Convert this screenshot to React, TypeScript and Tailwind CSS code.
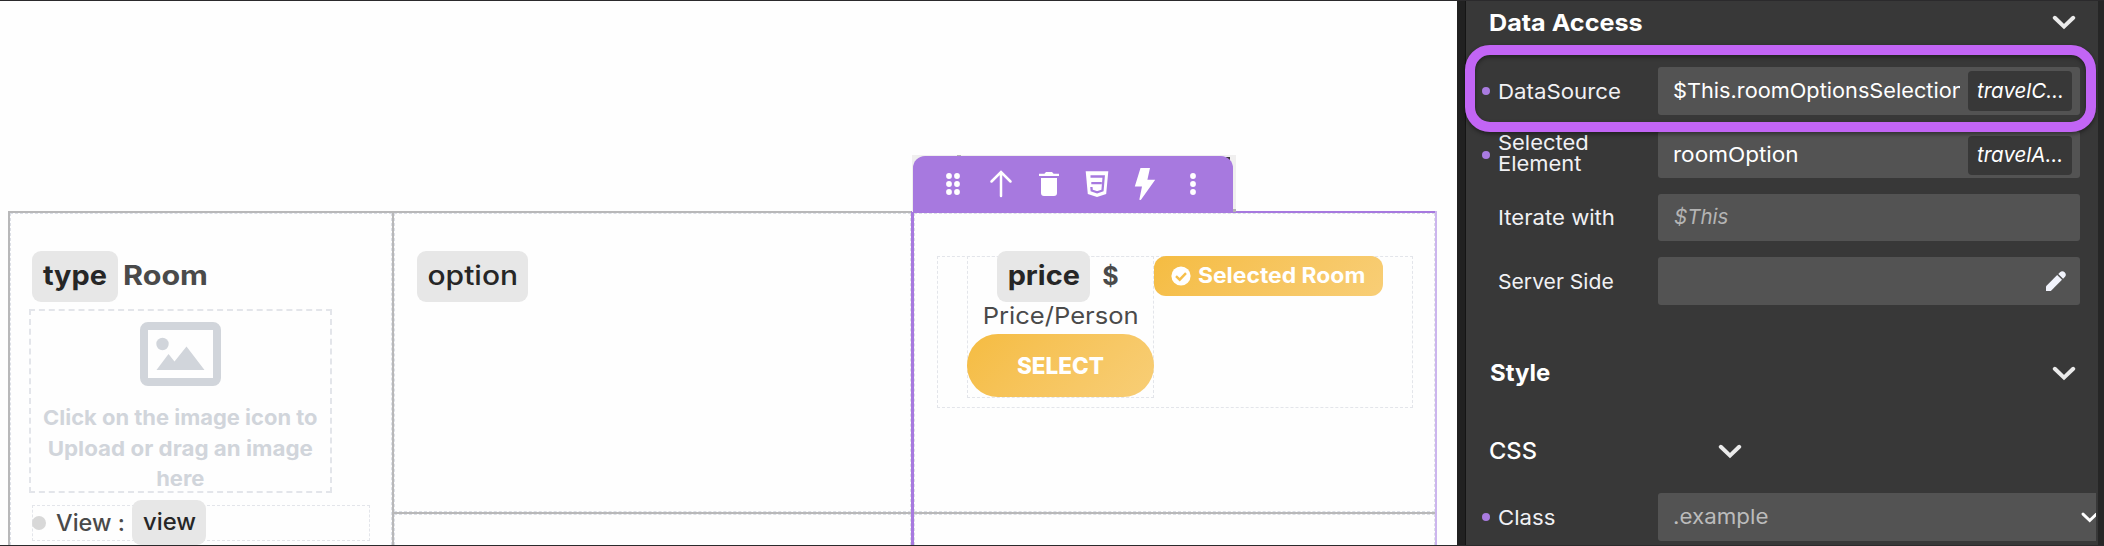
import type { ReactNode } from "react";

function Chevron({ className }: { className: string }) {
  return (
    <svg viewBox="0 0 24 15" className={className} fill="none" stroke="currentColor" strokeWidth="4" strokeLinecap="round">
      <path d="M2.8 2.8 L12 11.6 L21.2 2.8" strokeLinejoin="miter" />
    </svg>
  );
}

function Row({ label, dot, className, children }: { label: ReactNode; dot?: boolean; className: string; children: ReactNode }) {
  return (
    <div className={`flex shrink-0 items-center pl-4 ${className}`}>
      <span className={`h-2 w-2 shrink-0 rounded-full ${dot ? "bg-[#a97be0]" : ""}`} />
      <div className="w-[168px] shrink-0 whitespace-nowrap pl-2 text-[20.5px] leading-[21px] text-[#f1f1f4]">{label}</div>
      {children}
    </div>
  );
}

function Tag({ className = "h-10", children }: { className?: string; children: ReactNode }) {
  return (
    <span className={`mr-2 flex w-[104px] shrink-0 items-center rounded-[4px] bg-[#383838] pl-[9px] text-[20.5px] italic text-white ${className}`}>
      {children}
    </span>
  );
}

function Toolbar() {
  return (
    <div className="absolute left-[912px] top-[154px] h-[57px] w-[324px] bg-[#f0efef]">
      <span className="absolute left-[45px] top-0 h-px w-[4px] bg-[#b3b3b3]" />
      <span className="absolute left-[314px] top-[2px] h-[3px] w-[4px] bg-[#3a3a3a]" />
      <div className="relative ml-px mt-px h-14 w-[320px] rounded-t-[12px] bg-[#a779df]">
        <svg viewBox="913 156 320 56" className="h-14 w-[320px]" fill="#fff">
          {[176, 184, 192].map((y) => (
            <g key={y}>
              <circle cx="949" cy={y} r="2.9" />
              <circle cx="957" cy={y} r="2.9" />
              <circle cx="1193" cy={y} r="2.9" />
            </g>
          ))}
          <path d="M1001 196V172.5M991.5 181.5L1001 172L1010.5 181.5" fill="none" stroke="#fff" strokeWidth="2.5" strokeLinecap="round" />
          <path d="M1039 173.8h5.4l1.6-1.8h6l1.6 1.8h5.4v2.1h-20zM1041 178h16v15a3 3 0 0 1-3 3h-10a3 3 0 0 1-3-3z" />
          <path d="M1085.7 171.3h22.6l-2.1 22.7-9.2 3-9.2-3z" />
          <path d="M1090.5 176.5h13.2l-1.2 14-5.4 1.8-5.4-1.8-.3-3.5M1091.3 183.2h10.5" fill="none" stroke="#a779df" strokeWidth="2.3" />
          <path d="M1140.5 168h9.5l-2.6 11.7h7.8l-14.4 20.3-1.5-.3 2.7-13.2h-7.2z" />
        </svg>
      </div>
      <span className="absolute bottom-0 right-0 h-[3px] w-[3px] bg-[#b3b3b3]" />
    </div>
  );
}

const chip = "inline-flex items-center justify-center rounded-[9px] bg-[#e7e7e7] text-[#262626]";
const field = "flex shrink-0 items-center bg-[#535353] text-[20.5px] text-white";

export default function App() {
  return (
    <div className="relative flex h-[546px] w-[2104px] overflow-hidden border-y border-[#2b2a2c] bg-[#fefefe] font-[Inter,sans-serif]">
      <main className="h-[544px] w-[1457px] shrink-0 overflow-hidden pl-2 pt-[210px]">
        <div className="grid h-[334px] w-[1429px] grid-cols-[382px_519px_526px] border-l-2 border-[#b8b8b9]">
          <section className="border-t-2 border-[#b8b8b9]">
            <div className="h-[332px] overflow-hidden border border-b-0 border-dashed border-[#dcdfe6] pl-[18px] pt-[37px]">
              <h2 className="ml-[3px] flex items-center text-[27px] font-bold text-[#4a4a4a]">
                <span className={`${chip} h-[51px] w-[86px]`}>
                  <span className="scale-x-[1.07]">type</span>
                </span>
                <span className="ml-[5px] origin-left scale-x-[1.13]">Room</span>
              </h2>
              <div className="mt-[7px] flex h-[184px] w-[303px] flex-col items-center border-2 border-dashed border-[#e3e5ea] pt-[11px] text-center text-[20.5px] font-bold leading-[30.5px] text-[#d1d5db]">
                <svg viewBox="0 0 81 64" className="h-16 w-[81px] shrink-0" fill="currentColor">
                  <rect x="4" y="4" width="73" height="56" rx="4" fill="none" stroke="currentColor" strokeWidth="8" />
                  <circle cx="22.5" cy="22" r="6.2" />
                  <path d="M16.5 48 28.5 32 34.5 39.5 46.5 24.5 64.5 48z" />
                </svg>
                <div className="mt-[17px] whitespace-nowrap">
                  <div className="scale-x-[1.07]">Click on the image icon to</div>
                  <div className="scale-x-[1.09]">Upload or drag an image</div>
                  <div className="scale-x-[1.07]">here</div>
                </div>
              </div>
              <div className="ml-[3px] mt-3 flex h-9 w-[338px] items-center border border-dashed border-[#e3e5ea] text-[23px] font-medium text-[#4a4a4a]">
                <span className="-ml-px size-[14px] rounded-full bg-[#d8d8d8]" />
                <span className="ml-[10px] origin-left scale-x-[1.02] whitespace-nowrap">View :</span>
                <span className={`${chip} -mt-[1px] ml-[9px] h-[45px] w-[74px]`}>
                  <span className="scale-x-[1.035]">view</span>
                </span>
              </div>
            </div>
          </section>

          <section className="flex flex-col border-l-2 border-[#b8b8b9]">
            <div className="h-[301px] border-t-2 border-[#b8b8b9]">
              <div className="h-[299px] border border-dashed border-[#dcdfe6] pl-[22px] pt-[37px]">
                <span className={`${chip} h-[51px] w-[111px] text-[27px] font-medium`}>
                  <span className="scale-x-[1.11]">option</span>
                </span>
              </div>
            </div>
            <div className="grow border-t-2 border-[#b8b8b9]">
              <div className="h-[31px] border-x border-t border-dashed border-[#dcdfe6]" />
            </div>
          </section>

          <section className="flex flex-col border-l-[3px] border-r-2 border-l-[#a779df] border-r-[#ccb5ee]">
            <div className="h-[301px] border-t-2 border-[#a779df]">
              <div className="h-[299px] border border-dashed border-[#dcdfe6] pl-[22px] pt-[42px]">
                <div className="flex h-[152px] w-[476px] border border-dashed border-[#e3e5ea] pl-[29px]">
                  <div className="-mt-px flex h-[142px] w-[187px] shrink-0 flex-col items-center border border-dashed border-[#e3e5ea] text-[#4a4a4a]">
                    <div className="-mt-[6px] flex items-center pr-[5px] text-[27px] font-bold">
                      <span className={`${chip} h-[51px] w-[93px]`}>
                        <span className="scale-x-[1.07]">price</span>
                      </span>
                      <span className="ml-[12px] text-[25px]">$</span>
                    </div>
                    <div className="h-[32px] scale-x-[1.088] text-[23.5px] leading-[28px]">Price/Person</div>
                    <div className="flex h-[63px] w-[187px] items-center justify-center rounded-[31px] bg-linear-135 from-[#f5bc41] to-[#f8ce76] text-[22.5px] font-extrabold text-white">
                      SELECT
                    </div>
                  </div>
                  <div className="-mt-px flex h-10 w-[229px] shrink-0 items-center rounded-[12px] bg-linear-135 from-[#f5bc41] to-[#f8ce76] pl-[17px] text-[21px] font-bold text-white">
                    <svg viewBox="0 0 20 20" className="size-5">
                      <circle cx="10" cy="10" r="9.6" fill="#fff" />
                      <path d="M5 10.2 8.7 13.7 15 7.2" fill="none" stroke="#f6bf4a" strokeWidth="2.4" />
                    </svg>
                    <span className="ml-[7px] origin-left scale-x-[1.09] whitespace-nowrap">Selected Room</span>
                  </div>
                </div>
              </div>
            </div>
            <div className="grow border-t-2 border-[#b8b8b9]">
              <div className="h-[31px] border-x border-t border-dashed border-[#dcdfe6]" />
            </div>
          </section>
        </div>
      </main>

      <div className="w-[9px] shrink-0 border-r border-[#151515] bg-[#212121]" />

      <aside className="flex w-[632px] shrink-0 flex-col overflow-hidden bg-[#383838]">
        <div className="flex h-[43px] shrink-0 items-center pl-[23px] pr-[22px]">
          <h3 className="origin-left scale-x-[1.07] text-[23.5px] font-bold text-white">Data Access</h3>
          <Chevron className="ml-auto h-[15px] w-6 text-[#ebebeb]" />
        </div>
        <Row dot className="mt-[23px] h-12" label={<div className="origin-left scale-x-[1.085]">DataSource</div>}>
          <div className={`${field} h-12 w-[422px] rounded-[3px] pl-[15px]`}>
            <div className="w-[287px] shrink-0 overflow-hidden whitespace-nowrap">
              <div className="origin-left scale-x-[1.06]">$This.roomOptionsSelection</div>
            </div>
            <div className="ml-auto">
              <Tag>travelC…</Tag>
            </div>
          </div>
        </Row>
        <Row
          dot
          className="mt-4 h-[47px]"
          label={
            <div className="origin-left scale-x-[1.07] pb-[3px]">
              Selected
              <br />
              Element
            </div>
          }
        >
          <div className={`${field} h-[47px] w-[422px] justify-between rounded-[3px] pl-[15px] pt-px`}>
            <span className="origin-left scale-x-[1.1]">roomOption</span>
            <Tag className="h-[39px]">travelA…</Tag>
          </div>
        </Row>
        <Row className="mt-4 h-[47px]" label={<div className="origin-left scale-x-[1.08]">Iterate with</div>}>
          <div className={`${field} h-[47px] w-[422px] rounded-[3px] pl-4`}>
            <span className="italic text-[#b4b4b4]">$This</span>
          </div>
        </Row>
        <Row className="mt-4 h-12" label={<div className="origin-left scale-x-[1.03]">Server Side</div>}>
          <div className={`${field} h-12 w-[422px] justify-end rounded-[3px] pr-[14px]`}>
            <svg viewBox="0 0 20 20" className="size-5" fill="#f1f3fc">
              <path d="M0 15.2 11.2 4 16 8.8 4.8 20H0z" />
              <path d="M12.3 2.9 14 1.2a3.4 3.4 0 0 1 4.8 4.8L17.1 7.7z" />
            </svg>
          </div>
        </Row>
        <div className="mt-[46px] flex h-[44px] shrink-0 items-center pl-6 pr-[22px]">
          <h3 className="origin-left scale-x-[1.02] text-[23.5px] font-bold text-white">Style</h3>
          <Chevron className="ml-auto h-[15px] w-6 text-[#ebebeb]" />
        </div>
        <div className="mt-[35px] flex h-[42px] shrink-0 items-center pl-[23px]">
          <h4 className="w-[229px] origin-left scale-x-[1.03] text-[23px] font-medium text-white">CSS</h4>
          <Chevron className="h-[15px] w-6 text-[#ebebeb]" />
        </div>
        <Row dot className="mt-[21px] h-12" label={<div className="origin-left scale-x-[1.08]">Class</div>}>
          <div className={`${field} h-12 w-[438px] justify-between overflow-hidden rounded-l-[3px] pl-[15px]`}>
            <span className="origin-left scale-x-[1.09] text-[#bcbcbc]">.example</span>
            <span className="w-[15px] overflow-hidden">
              <Chevron className="h-[11px] w-[17.5px] max-w-none" />
            </span>
          </div>
        </Row>
      </aside>
      <div className="grow bg-[#262626]" />

      <Toolbar />
      <div className="absolute left-[1465px] top-[44px] h-[87px] w-[631px] rounded-[25px] border-[10px] border-[#c265f5] shadow-[0_2px_4px_rgba(0,0,0,0.45),inset_0_2px_4px_rgba(0,0,0,0.4)]" />
    </div>
  );
}
